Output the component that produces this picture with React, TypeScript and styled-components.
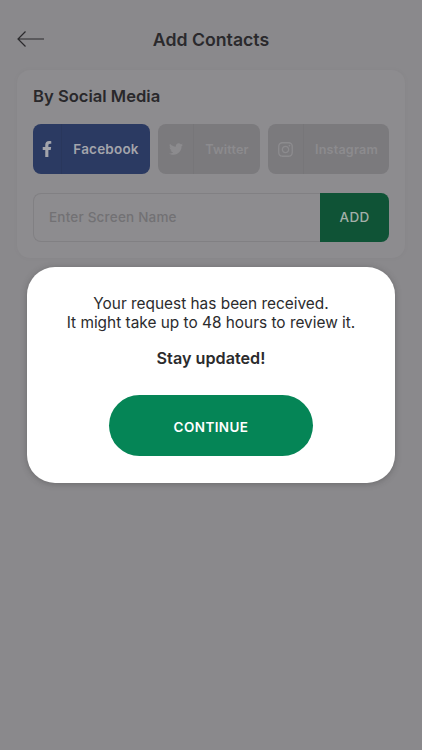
import React from "react";
import styled, { createGlobalStyle } from "styled-components";
import { FaFacebookF, FaTwitter, FaInstagram } from "react-icons/fa";

const Global = createGlobalStyle`
  html, body { margin: 0; padding: 0; background: #8a898c; }
  * { box-sizing: border-box; }
  body { font-family: Inter, "Liberation Sans", sans-serif; }
`;

const Page = styled.div`
  position: relative;
  width: 422px;
  height: 750px;
  overflow: hidden;
  background: #8a898c;
  padding: 0 17px;
`;

const Header = styled.header`
  position: relative;
  height: 70px;
  padding-top: 28px;
  display: flex;
  justify-content: center;
`;

const BackIcon = styled.svg`
  position: absolute;
  left: 0;
  top: 30px;
  width: 28px;
  height: 18px;
  fill: none;
  stroke: #2b2a2d;
  stroke-width: 1.2;
`;

const Title = styled.h1`
  margin: 0;
  font-size: 17.7px;
  line-height: 24px;
  font-weight: 600;
  color: #2a292c;
`;

const Card = styled.section`
  height: 188px;
  background: #8d8c8f;
  border-radius: 13px;
  padding: 15px 16px;
  box-shadow: 0 0 3px rgba(128, 127, 130, 0.3);
`;

const CardTitle = styled.h2`
  margin: 0 0 17px;
  font-size: 16.6px;
  line-height: 22px;
  font-weight: 600;
  color: #29282b;
`;

const Socials = styled.div`
  display: flex;
  gap: 8px;
`;

const Social = styled.div<{ $w: number; $icon: number; $active?: boolean }>`
  display: grid;
  grid-template-columns: ${(p) => p.$icon}px 1fr;
  width: ${(p) => p.$w}px;
  height: 50px;
  border-radius: 8px;
  background: ${(p) => (p.$active ? "#2b3a62" : "#7b7a7d")};
  color: ${(p) => (p.$active ? "#a3a4ab" : "#8c8b8e")};
  font-size: ${(p) => (p.$active ? 13.5 : 12.6)}px;
  font-weight: 600;
  letter-spacing: 0.2px;
  overflow: hidden;
`;

const SocialIcon = styled.span<{ $active?: boolean; $size: number }>`
  display: flex;
  align-items: center;
  justify-content: center;
  font-size: ${(p) => p.$size}px;
  border-right: 1px solid ${(p) => (p.$active ? "#29375c" : "#777679")};
`;

const SocialLabel = styled.span`
  display: flex;
  align-items: center;
  justify-content: center;
`;

const InputRow = styled.div`
  display: flex;
  height: 49px;
  margin-top: 19px;
`;

const Input = styled.div`
  flex: 1;
  display: flex;
  align-items: center;
  padding: 0 0 2px 15px;
  border: 1px solid #818083;
  border-right: 0;
  border-radius: 8px 0 0 8px;
  color: #727174;
  font-size: 13.5px;
  font-weight: 500;
  letter-spacing: 0.2px;
`;

const AddButton = styled.div`
  width: 69px;
  display: flex;
  align-items: center;
  justify-content: center;
  padding-bottom: 2px;
  border-radius: 0 8px 8px 0;
  background: #0f5336;
  color: #a3b0a9;
  font-size: 13.5px;
  font-weight: 500;
  letter-spacing: 0.3px;
`;

const Modal = styled.div`
  position: absolute;
  left: 27px;
  top: 267px;
  width: 368px;
  height: 216px;
  display: flex;
  flex-direction: column;
  align-items: center;
  padding-top: 28px;
  background: #fff;
  border-radius: 28px;
  box-shadow: 0 1px 6px rgba(50, 50, 50, 0.35);
`;

const Message = styled.p`
  margin: 0;
  font-size: 15.4px;
  line-height: 18.5px;
  font-weight: 400;
  text-align: center;
  color: #2b2b2d;
`;

const Emphasis = styled.p`
  margin: 16px 0 0;
  font-size: 16.2px;
  line-height: 20px;
  font-weight: 600;
  color: #2b2b2d;
`;

const Continue = styled.button`
  width: 204px;
  height: 61px;
  margin-top: 27px;
  padding: 2px 0 0;
  border: 0;
  border-radius: 31px;
  background: #058556;
  color: #fff;
  font-family: inherit;
  font-size: 13.5px;
  font-weight: 600;
  letter-spacing: 0.4px;
`;

export default function App() {
  return (
    <Page>
      <Global />
      <Header>
        <BackIcon viewBox="0 0 28 18">
          <path d="M27 9 H1 M8.5 1.5 L1 9 L8.5 16.5" />
        </BackIcon>
        <Title>Add Contacts</Title>
      </Header>
      <Card>
        <CardTitle>By Social Media</CardTitle>
        <Socials>
          <Social $w={117} $icon={29} $active>
            <SocialIcon $active $size={16}><FaFacebookF /></SocialIcon>
            <SocialLabel>Facebook</SocialLabel>
          </Social>
          <Social $w={102} $icon={36}>
            <SocialIcon $size={14}><FaTwitter /></SocialIcon>
            <SocialLabel>Twitter</SocialLabel>
          </Social>
          <Social $w={121} $icon={36}>
            <SocialIcon $size={17}><FaInstagram /></SocialIcon>
            <SocialLabel>Instagram</SocialLabel>
          </Social>
        </Socials>
        <InputRow>
          <Input>Enter Screen Name</Input>
          <AddButton>ADD</AddButton>
        </InputRow>
      </Card>
      <Modal>
        <Message>
          Your request has been received.
          <br />
          It might take up to 48 hours to review it.
        </Message>
        <Emphasis>Stay updated!</Emphasis>
        <Continue>CONTINUE</Continue>
      </Modal>
    </Page>
  );
}
